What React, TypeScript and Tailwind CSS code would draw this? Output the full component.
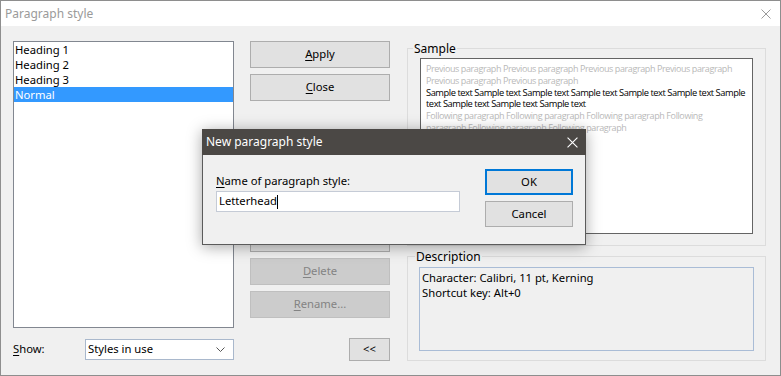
import React from "react";

const font = { fontFamily: '"Noto Sans", "Segoe UI", Arial, sans-serif' };

function Btn({ label, u, disabled, className = "" }: { label: string; u: number; disabled?: boolean; className?: string }) {
  return (
    <div
      className={
        "h-[27px] w-[140px] flex items-center justify-center border text-[11.25px] " +
        (disabled ? "bg-[#cccccc] border-[#bfbfbf] text-[#838383]" : "bg-[#e1e1e1] border-[#adadad] text-black") +
        " " + className
      }
    >
      <span>
        {label.slice(0, u)}
        <span className="underline underline-offset-2">{label[u]}</span>
        {label.slice(u + 1)}
      </span>
    </div>
  );
}

function XIcon({ color, size }: { color: string; size: number }) {
  return (
    <svg width={size} height={size} viewBox="0 0 10 10">
      <path d="M0.5 0.5 L9.5 9.5 M9.5 0.5 L0.5 9.5" stroke={color} strokeWidth="1" fill="none" />
    </svg>
  );
}

const sampleFont = { fontFamily: '"Open Sans", "Noto Sans", sans-serif' };

export default function App() {
  return (
    <div className="w-[781px] h-[376px] relative overflow-hidden" style={font}>
      <div className="w-full h-full flex flex-col border border-[#8e8e8e] bg-[#f0f0f0]">
        {/* title bar */}
        <div className="h-[25px] bg-white flex items-center justify-between pl-[4px] pr-[9px] shrink-0">
          <span className="text-[12px] text-[#9a9a9a]">Paragraph style</span>
          <XIcon color="#9a9a9a" size={10} />
        </div>
        {/* body */}
        <div className="flex flex-1 pt-[15px] pl-[12px]">
          {/* left column */}
          <div className="w-[221px] flex flex-col">
            <div className="h-[287px] bg-white border border-[#828790] text-[11.25px] leading-[15px]">
              <div className="px-[1px]">Heading 1</div>
              <div className="px-[1px]">Heading 2</div>
              <div className="px-[1px]">Heading 3</div>
              <div className="px-[1px] bg-[#3399ff] text-white">Normal</div>
            </div>
            <div className="flex items-center mt-[11px] h-[21px]">
              <span className="text-[11.25px] w-[72px]">
                <span className="underline underline-offset-2">S</span>how:
              </span>
              <div className="flex-1 h-[21px] bg-white border border-[#a9b8cc] flex items-center justify-between pl-[2px] pr-[8px] text-[11.25px]">
                <span>Styles in use</span>
                <svg width="9" height="6" viewBox="0 0 9 6">
                  <path d="M0.5 0.5 L4.5 4.5 L8.5 0.5" stroke="#555" strokeWidth="1" fill="none" />
                </svg>
              </div>
            </div>
          </div>
          {/* middle column */}
          <div className="ml-[16px] w-[140px] flex flex-col">
            <Btn label="Apply" u={0} />
            <Btn label="Close" u={0} className="mt-[6px]" />
            <Btn label="New..." u={0} className="mt-[91px]" />
            <Btn label="Modify..." u={0} className="mt-[6px]" />
            <Btn label="Delete" u={0} disabled className="mt-[6px]" />
            <Btn label="Rename..." u={0} disabled className="mt-[6px]" />
            <div className="mt-[20px] self-end w-[41px] h-[23px] bg-[#e1e1e1] border border-[#adadad] flex items-center justify-center text-[11.25px]">
              &lt;&lt;
            </div>
          </div>
          {/* right column */}
          <div className="ml-[17px] w-[359px] flex flex-col">
            <fieldset className="h-[205px] min-w-0 border border-[#dcdcdc] px-[12px]">
              <legend className="-ml-[7px] px-[1px] text-[12px] leading-[15px] text-black">Sample</legend>
              <div className="h-[176px] mt-[2px] bg-white border border-[#646464] pl-[5px] pt-[4px] leading-[11.8px] whitespace-nowrap overflow-hidden" style={sampleFont}>
                <div className="text-[#b9b9b9] text-[9px] tracking-[-0.4px]">
                  Previous paragraph Previous paragraph Previous paragraph Previous paragraph
                  <br />
                  Previous paragraph Previous paragraph
                </div>
                <div className="text-black text-[9.3px] font-medium tracking-[-0.45px]">
                  Sample text Sample text Sample text Sample text Sample text Sample text Sample
                  <br />
                  text Sample text Sample text Sample text
                </div>
                <div className="text-[#b9b9b9] text-[9px] tracking-[-0.4px]">
                  Following paragraph Following paragraph Following paragraph Following
                  <br />
                  paragraph Following paragraph Following paragraph
                </div>
              </div>
            </fieldset>
            <fieldset className="h-[112px] min-w-0 border border-[#dcdcdc] mt-[3px] px-[11px]">
              <legend className="-ml-[4px] px-[1px] text-[12px] leading-[15px] text-black">Description</legend>
              <div className="h-[84px] mt-[3px] border border-[#a9bcd6] px-[2px] pt-[2px] text-[11.25px] leading-[15px]">
                <div>Character: Calibri, 11 pt, Kerning</div>
                <div>Shortcut key: Alt+0</div>
              </div>
            </fieldset>
          </div>
        </div>
      </div>

      {/* modal */}
      <div className="absolute left-[202px] top-[129px] w-[384px] h-[116px] border border-[#5b5b5b] bg-[#f0f0f0] flex flex-col shadow-[0_2px_14px_rgba(0,0,0,0.35)]">
        <div className="h-[26px] bg-[#4b4845] flex items-center justify-between pl-[4px] pr-[8px] shrink-0 -mt-[1px] -mx-[1px]">
          <span className="text-[12px] text-white">New paragraph style</span>
          <XIcon color="#ffffff" size={11} />
        </div>
        <div className="flex pl-[13px] pt-[14px]">
          <div className="flex flex-col w-[244px]">
            <div className="text-[11.25px] leading-[15px] mt-[4px]">
              <span className="underline underline-offset-2">N</span>ame of paragraph style:
            </div>
            <div className="mt-[3px] h-[21px] bg-white border border-[#c5cbd6] flex items-center pl-[2px] text-[11.25px]">
              <span>Letterhead</span>
              <span className="w-[1px] h-[14px] bg-black" />
            </div>
          </div>
          <div className="ml-[25px] flex flex-col">
            <div className="w-[88px] h-[26px] bg-[#e1e1e1] border-2 border-[#0078d7] flex items-center justify-center text-[11.25px]">OK</div>
            <div className="mt-[6px] w-[88px] h-[26px] bg-[#e1e1e1] border border-[#adadad] flex items-center justify-center text-[11.25px]">Cancel</div>
          </div>
        </div>
      </div>
    </div>
  );
}
